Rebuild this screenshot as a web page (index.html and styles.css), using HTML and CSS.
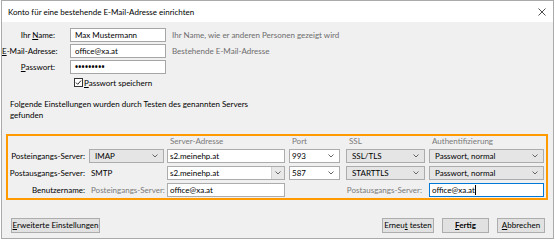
FILE: index.html
```html
<!DOCTYPE html>
<html lang="de">
<head>
<meta charset="utf-8">
<title>Konto einrichten</title>
<link rel="stylesheet" href="styles.css">
</head>
<body>
<div class="window">
  <div class="titlebar">
    <span class="title">Konto für eine bestehende E-Mail-Adresse einrichten</span>
    <svg class="close" viewBox="0 0 8 8"><path d="M0.5 0.5 L7.5 7.5 M7.5 0.5 L0.5 7.5" stroke="#3a3a3a" stroke-width="0.9" fill="none"/></svg>
  </div>
  <div class="content">
    <div class="form">
      <label class="flabel">Ihr <u>N</u>ame:</label>
      <div class="input">Max Mustermann</div>
      <span class="hint">Ihr Name, wie er anderen Personen gezeigt wird</span>

      <label class="flabel"><u>E</u>-Mail-Adresse:</label>
      <div class="input">office@xa.at</div>
      <span class="hint">Bestehende E-Mail-Adresse</span>

      <label class="flabel"><u>P</u>asswort:</label>
      <div class="input pw">•••••••••</div>
      <span></span>

      <div class="checkrow">
        <svg class="checkbox" viewBox="0 0 9 9"><rect x="0.5" y="0.5" width="8" height="8" fill="#fff" stroke="#333"/><path d="M2 4.6 L3.7 6.3 L7 2.6" fill="none" stroke="#222" stroke-width="1"/></svg>
        <span><u>P</u>asswort speichern</span>
      </div>
    </div>

    <p class="info">Folgende Einstellungen wurden durch Testen des genannten Servers<br>gefunden</p>

    <div class="servers">
      <span></span>
      <span></span>
      <span class="colhead">Server-Adresse</span>
      <span class="colhead">Port</span>
      <span class="colhead">SSL</span>
      <span class="colhead">Authentifizierung</span>

      <span class="slabel">Posteingangs-Server:</span>
      <div class="select w75"><span>IMAP</span><svg class="chev" viewBox="0 0 6 4"><path d="M0.5 0.5 L3 3 L5.5 0.5" fill="none" stroke="#666"/></svg></div>
      <div class="sinput w118">s2.meinehp.at</div>
      <div class="combo w51"><span>993</span><svg class="chev" viewBox="0 0 6 4"><path d="M0.5 0.5 L3 3 L5.5 0.5" fill="none" stroke="#666"/></svg></div>
      <div class="select w79"><span>SSL/TLS</span><svg class="chev" viewBox="0 0 6 4"><path d="M0.5 0.5 L3 3 L5.5 0.5" fill="none" stroke="#666"/></svg></div>
      <div class="select w115"><span>Passwort, normal</span><svg class="chev" viewBox="0 0 6 4"><path d="M0.5 0.5 L3 3 L5.5 0.5" fill="none" stroke="#666"/></svg></div>

      <span class="slabel">Postausgangs-Server:</span>
      <span class="plain">SMTP</span>
      <div class="combo w118 split"><span>s2.meinehp.at</span><span class="btnpart"><svg class="chev" viewBox="0 0 6 4"><path d="M0.5 0.5 L3 3 L5.5 0.5" fill="none" stroke="#666"/></svg></span></div>
      <div class="combo w51"><span>587</span><svg class="chev" viewBox="0 0 6 4"><path d="M0.5 0.5 L3 3 L5.5 0.5" fill="none" stroke="#666"/></svg></div>
      <div class="select w79"><span>STARTTLS</span><svg class="chev" viewBox="0 0 6 4"><path d="M0.5 0.5 L3 3 L5.5 0.5" fill="none" stroke="#666"/></svg></div>
      <div class="select w115"><span>Passwort, normal</span><svg class="chev" viewBox="0 0 6 4"><path d="M0.5 0.5 L3 3 L5.5 0.5" fill="none" stroke="#666"/></svg></div>

      <span class="slabel">Benutzername:</span>
      <span class="plain grey">Posteingangs-Server:</span>
      <div class="sinput w118">office@xa.at</div>
      <span class="outlabel">Postausgangs-Server:</span>
      <div class="sinput w115 focus">office@xa.at<span class="caret"></span></div>
    </div>

    <div class="buttons">
      <button class="btn w89"><u>E</u>rweiterte Einstellungen</button>
      <div class="right">
        <button class="btn w52">Erneu<u>t</u> testen</button>
        <button class="btn w47 bold"><u>F</u>ertig</button>
        <button class="btn w48"><u>A</u>bbrechen</button>
      </div>
    </div>
  </div>
</div>
</body>
</html>
```

FILE: styles.css
```css
* { box-sizing: border-box; margin: 0; padding: 0; }

body {
  background: #ffffff;
  font-family: Lato, "Liberation Sans", sans-serif;
  font-size: 8px;
  color: #000;
}

.window {
  margin-left: 1px;
  width: 553px;
  height: 239px;
  border: 1px solid #aaaaaa;
  background: #f0f0f0;
  display: flex;
  flex-direction: column;
}

.titlebar {
  height: 21px;
  background: #ffffff;
  display: flex;
  align-items: center;
  justify-content: space-between;
  padding: 0 6px 0 6px;
}

.title { font-size: 8px; line-height: 12px; }

.close { width: 8px; height: 8px; margin-right: 1px; }

.content {
  display: flex;
  flex-direction: column;
}

.form {
  margin-top: 6px;
  display: grid;
  grid-template-columns: 68px 96px 1fr;
  grid-auto-rows: 14px;
  row-gap: 2px;
}

.flabel {
  text-align: right;
  padding-right: 15px;
  line-height: 14px;
  white-space: nowrap;
}

.input {
  height: 14px;
  border: 1px solid #a6a6a6;
  background: #fff;
  padding-left: 4px;
  line-height: 12px;
  white-space: nowrap;
  overflow: hidden;
}

.input.pw { font-family: "Noto Sans", sans-serif; font-size: 8px; font-weight: bold; letter-spacing: 0.3px; line-height: 12px; }

.hint {
  padding-left: 6px;
  color: #6d6d6d;
  line-height: 14px;
  white-space: nowrap;
}

.checkrow {
  grid-column: 2 / span 2;
  height: 13px;
  display: flex;
  align-items: center;
  gap: 1px;
  padding-left: 4px;
}

.checkbox { width: 9px; height: 9px; }

.info {
  margin: 9px 0 0 8px;
  line-height: 11px;
}

.servers {
  margin: 13px 0 0 4px;
  width: 542px;
  border: 2px solid #ff9a00;
  padding: 0 2px 1px 0;
  display: grid;
  grid-template-columns: 81px 78px 122px 57px 83px 115px;
  grid-template-rows: 10px 14px 14px 14px;
  row-gap: 3px;
}

.colhead {
  color: #7a7a7a;
  line-height: 10px;
  padding-left: 3px;
  white-space: nowrap;
}

.slabel {
  text-align: right;
  padding-right: 4px;
  line-height: 14px;
  white-space: nowrap;
}

.plain {
  padding-left: 2px;
  line-height: 14px;
  white-space: nowrap;
}

.grey { color: #7a7a7a; }

.outlabel {
  grid-column: 4 / span 2;
  text-align: right;
  padding-right: 7px;
  color: #7a7a7a;
  line-height: 14px;
  white-space: nowrap;
}

.select, .combo, .sinput {
  height: 14px;
  border: 1px solid #acacac;
  display: flex;
  align-items: center;
  justify-content: space-between;
  white-space: nowrap;
  overflow: hidden;
}

.select {
  background: #e5e5e5;
  padding: 0 5px 0 5px;
}

.combo {
  background: #fff;
  padding: 0 5px 0 2px;
}

.combo.split { padding-right: 0; }

.btnpart {
  width: 13px;
  height: 12px;
  background: #e8e8e8;
  border-left: 1px solid #d0d0d0;
  display: flex;
  align-items: center;
  justify-content: center;
}

.sinput {
  background: #fff;
  padding-left: 2px;
  justify-content: flex-start;
}

.sinput.focus { border-color: #0078d7; }

.caret {
  display: inline-block;
  width: 1px;
  height: 10px;
  background: #000;
  margin-left: 0.5px;
}

.chev { width: 6px; height: 4px; flex: none; }

.w75 { width: 75px; }
.w118 { width: 118px; }
.w51 { width: 51px; }
.w79 { width: 79px; }
.w115 { width: 115px; }

.buttons {
  margin-top: 18px;
  padding: 0 8px 0 9px;
  display: flex;
  justify-content: space-between;
}

.right { display: flex; gap: 8px; }

.btn {
  height: 15px;
  border: 1px solid #adadad;
  background: #e1e1e1;
  font-family: Lato, "Liberation Sans", sans-serif;
  font-size: 8px;
  line-height: 13px;
  color: #000;
  text-align: center;
  white-space: nowrap;
}

.bold { font-weight: bold; }

.w89 { width: 89px; }
.w52 { width: 52px; }
.w47 { width: 47px; }
.w48 { width: 48px; }
```
